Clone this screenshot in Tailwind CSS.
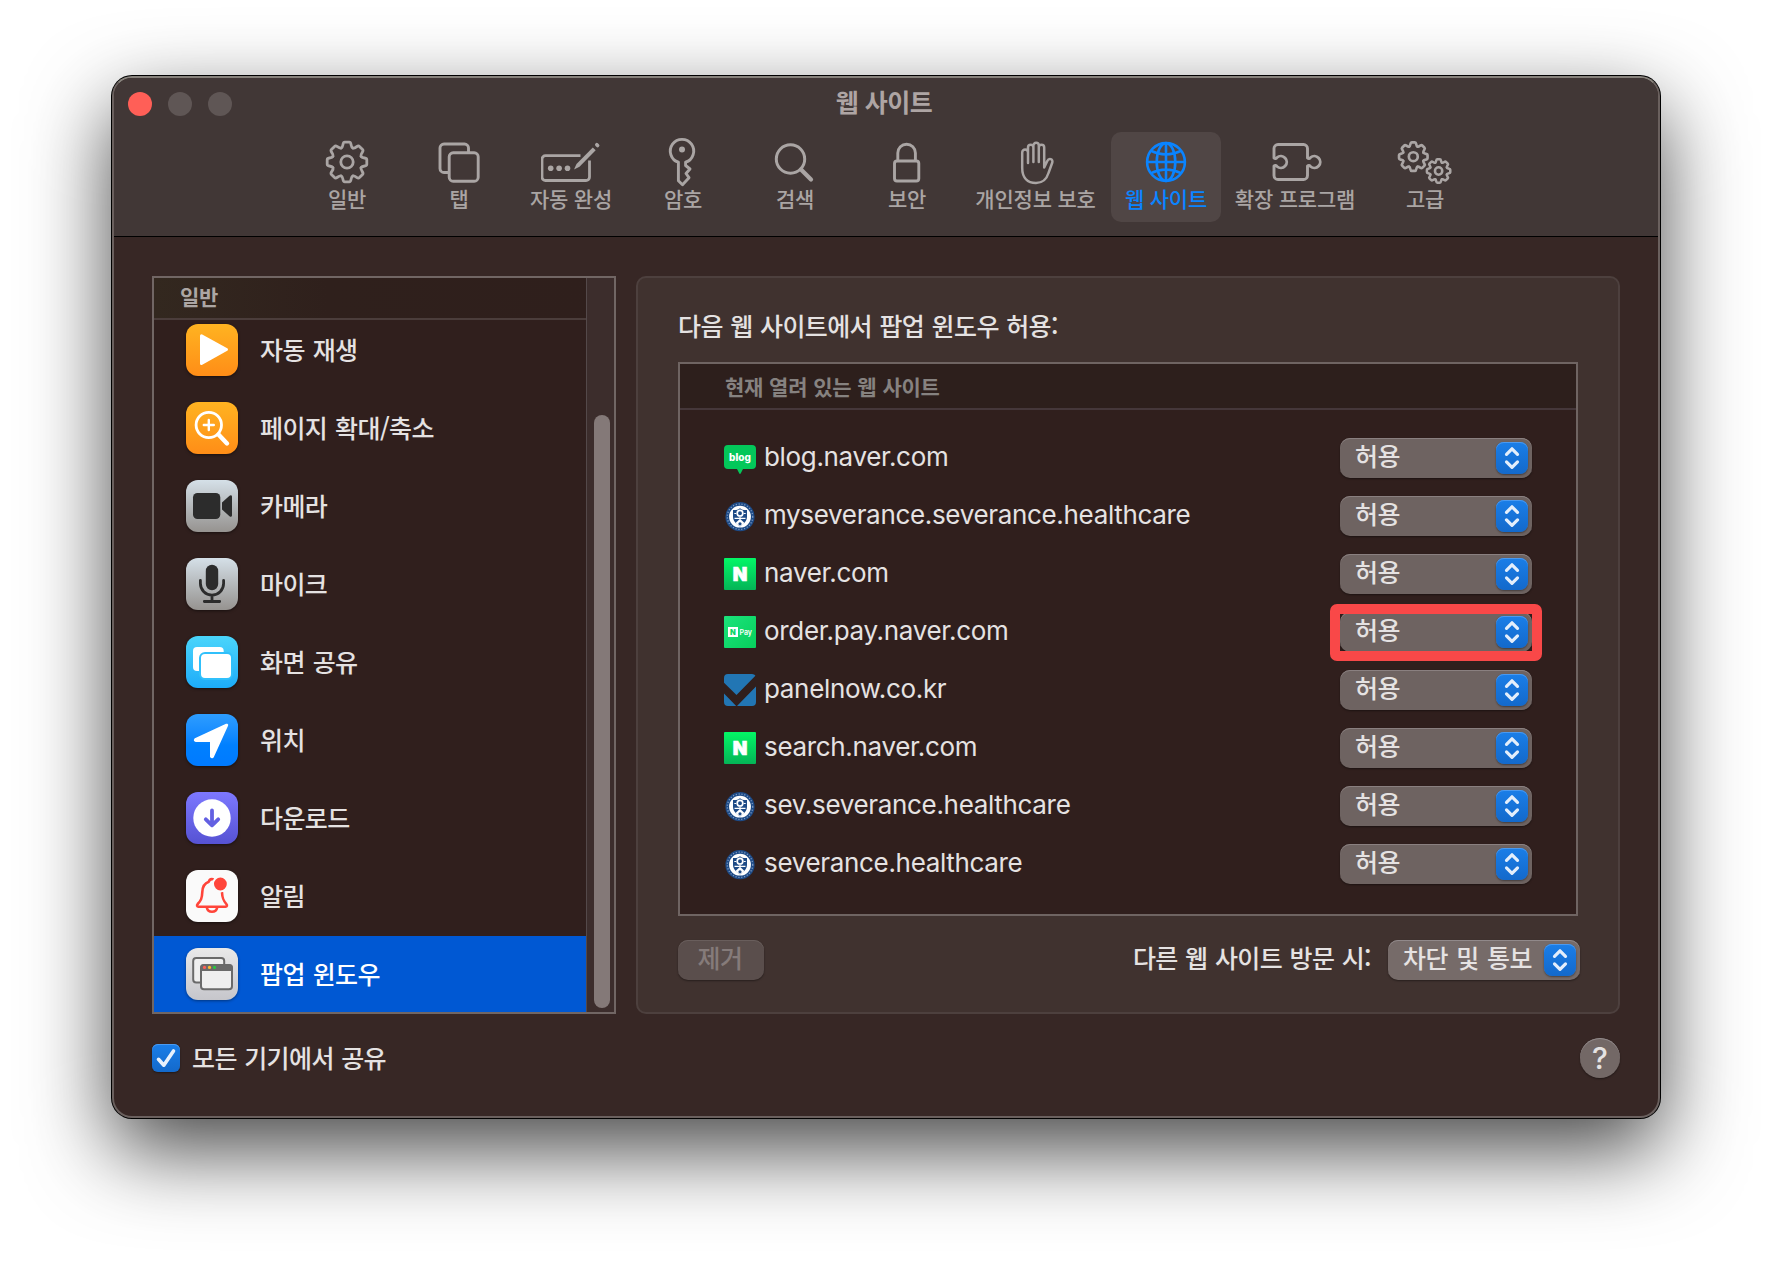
<!DOCTYPE html>
<html lang="ko">
<head>
  <meta charset="UTF-8" />
  <meta name="viewport" content="width=device-width, initial-scale=1.0" />
  <title>웹 사이트</title>
  <script src="https://cdn.jsdelivr.net/npm/@tailwindcss/browser@4"></script>
</head>
<body class="h-screen pl-[112px] pt-[76px] bg-white overflow-hidden font-['Noto_Sans_CJK_KR',sans-serif] text-[#e5e2e2]">

<!-- Shared icon shapes -->
<svg class="absolute w-0 h-0" aria-hidden="true">
  <defs>
    <path id="tooth" d="M-5.8-14C-4.8-14.4-4.3-16-4-17.6-3.7-19.4-3.2-19.8-2.2-19.8H2.2C3.2-19.8 3.7-19.4 4-17.6 4.3-16 4.8-14.4 5.8-14" />
    <g id="gear" fill="none" stroke="currentColor" stroke-linecap="round">
      <use href="#tooth" />
      <use href="#tooth" transform="rotate(45)" />
      <use href="#tooth" transform="rotate(90)" />
      <use href="#tooth" transform="rotate(135)" />
      <use href="#tooth" transform="rotate(180)" />
      <use href="#tooth" transform="rotate(225)" />
      <use href="#tooth" transform="rotate(270)" />
      <use href="#tooth" transform="rotate(315)" />
      <circle r="6.2" />
    </g>
    <linearGradient id="naverBg" x1="0" y1="0" x2="0" y2="1"><stop offset="0" stop-color="#03f766" /><stop offset="1" stop-color="#04b457" /></linearGradient>
    <linearGradient id="payBg" x1="0" y1="0" x2="1" y2="1"><stop offset="0" stop-color="#1be37c" /><stop offset="1" stop-color="#07cf5c" /></linearGradient>

    <symbol id="blog" viewBox="0 0 32 32">
      <path fill="#03c75a" d="M4 3h24a4 4 0 0 1 4 4v16a4 4 0 0 1-4 4h-9l-2.300 4.500a.8.8 0 0 1-1.400 0L13 27H4a4 4 0 0 1-4-4V7a4 4 0 0 1 4-4z" />
      <text x="16" y="18.500" text-anchor="middle" font-family="Inter" font-weight="800" font-size="10" textLength="22" fill="#fff">blog</text>
    </symbol>
    <symbol id="naver" viewBox="0 0 32 32">
      <rect width="32" height="32" rx="1" fill="url(#naverBg)" />
      <text x="16" y="23" text-anchor="middle" font-family="Inter" font-weight="900" font-size="19" fill="#fff" stroke="#fff" stroke-width=".7">N</text>
    </symbol>
    <symbol id="pay" viewBox="0 0 32 32">
      <rect width="32" height="32" rx="1" fill="url(#payBg)" />
      <rect x="4" y="11" width="10" height="10" fill="#fff" />
      <text x="9" y="18.800" text-anchor="middle" font-family="Inter" font-weight="900" font-size="7.500" fill="#0bd566">N</text>
      <text x="15.500" y="18.800" font-family="Inter" font-weight="600" font-size="7.500" textLength="12.500" lengthAdjust="spacingAndGlyphs" fill="#fff">Pay</text>
    </symbol>
    <symbol id="panel" viewBox="0 0 32 32">
      <path fill="#2276b4" d="M4 0h24c1.500 0 2.700.8 3.400 1.800L12.500 21 0 8.800V4a4 4 0 0 1 4-4zM0 19.500 12.200 32H4a4 4 0 0 1-4-4zM32 12.500V28a4 4 0 0 1-4 4H13z" />
    </symbol>
    <symbol id="severance" viewBox="0 0 32 32">
      <circle cx="16" cy="16.700" r="14.600" fill="#1d4a86" />
      <circle cx="16" cy="16.700" r="12.700" fill="none" stroke="#7f9ac0" stroke-width="1.300" stroke-dasharray="1.200 1.700" />
      <circle cx="16" cy="16.700" r="10.900" fill="#fff" />
      <path fill="#1d4a86" d="M9 10c3 .4 5-.4 7-1.800 2 1.400 4 2.200 7 1.800v6.500c0 4.500-3.200 7.700-7 10-3.800-2.300-7-5.500-7-10z" />
      <circle cx="16" cy="13.200" r="2.800" fill="#1d4a86" stroke="#fff" stroke-width="1.700" />
      <path fill="none" stroke="#fff" stroke-width="1.200" d="M10.300 13.500h2M19.700 13.500h2M16 16.500v2.500M10.500 18.300h11" />
      <path fill="#fff" d="M11.500 23 16 18.800l4.500 4.200c-1.200 1.400-2.800 2.500-4.500 3.500-1.700-1-3.300-2.100-4.500-3.500z" />
      <circle cx="16" cy="23.800" r="1.600" fill="#1d4a86" />
    </symbol>
    <symbol id="updown" viewBox="0 0 32 32">
      <path fill="none" stroke="#e3eefb" stroke-width="3.200" stroke-linecap="round" stroke-linejoin="round" d="M10.500 12.300 16 6.800l5.500 5.500M10.500 19.900 16 25.400l5.500-5.500" />
    </symbol>
  </defs>
</svg>

<!-- Window -->
<div class="w-[1548px] h-[1042px] rounded-[20px] border-2 border-[#6a605e] border-t-[#87827c] bg-[#372725] overflow-hidden shadow-[0_0_0_1px_#000,0_32px_84px_rgba(0,0,0,0.73)]">

  <!-- Title bar and toolbar -->
  <header class="h-[159px] bg-[#413736] border-b border-black">
    <div class="relative flex gap-4 h-[54px] pl-[14px] pt-[14px]">
      <span class="size-6 rounded-full bg-[#ff5f57]"></span>
      <span class="size-6 rounded-full bg-[#5f5655]"></span>
      <span class="size-6 rounded-full bg-[#5f5655]"></span>
      <h1 class="absolute left-0 right-1 top-[9px] text-center text-[25px] leading-[28px] tracking-[-0.5px] font-bold text-[#aea5a4]">웹 사이트</h1>
    </div>

    <nav class="flex justify-center gap-0.5 h-[90px] text-[21px] leading-5 tracking-[-0.2px] font-medium text-[#aaa5a4] whitespace-nowrap">
      <div class="w-[110px] flex flex-col items-center pt-0.5">
        <svg class="w-[60px] h-14" viewBox="-30 -28 60 56"><use href="#gear" stroke-width="2.800" /></svg>
        <span class="-mt-0.5">일반</span>
      </div>
      <div class="w-[110px] flex flex-col items-center pt-0.5">
        <svg class="w-[60px] h-14" viewBox="-30 -28 60 56" fill="none" stroke="currentColor" stroke-width="2.900">
          <path d="M-11 10.500H-15a4 4 0 0 1-4-4V-14a4 4 0 0 1 4-4H5.500a4 4 0 0 1 4 4v5" />
          <rect x="-9.800" y="-9.200" width="29" height="28.400" rx="4" />
        </svg>
        <span class="-mt-0.5">탭</span>
      </div>
      <div class="w-[110px] flex flex-col items-center pt-0.5">
        <svg class="w-[60px] h-14" viewBox="-29.500 -28 60 56" fill="none" stroke="currentColor" stroke-width="2.800">
          <path d="M10-6.300H-25a3.500 3.500 0 0 0-3.500 3.500V15a3.500 3.500 0 0 0 3.500 3.500H15.500a3.500 3.500 0 0 0 3.500-3.500V-1.500" />
          <path d="M3.500 7.500 6 2 22.300-14.600l2.900 2.900L9 4.800z" fill="currentColor" stroke="none" />
          <path d="m26.300-17.300.8.8" stroke-width="3.600" stroke-linecap="round" />
          <g fill="currentColor" stroke="none"><circle cx="-19.800" cy="6.300" r="2.800" /><circle cx="-11.400" cy="6.300" r="2.800" /><circle cx="-3" cy="6.300" r="2.800" /></g>
        </svg>
        <span class="-mt-0.5">자동 완성</span>
      </div>
      <div class="w-[110px] flex flex-col items-center pt-0.5">
        <svg class="w-[60px] h-14" viewBox="-30 -28 60 56" fill="none" stroke="currentColor" stroke-width="2.900" stroke-linejoin="round">
          <path d="M-4.600.2A11.700 11.700 0 1 1 2.600.2V3.500L7 7 3 11.500l3 4.200-6.500 7-4.100-4z" />
          <circle cx="-1" cy="-12.500" r="3" fill="currentColor" stroke="none" />
        </svg>
        <span class="-mt-0.5">암호</span>
      </div>
      <div class="w-[110px] flex flex-col items-center pt-0.5">
        <svg class="w-[60px] h-14" viewBox="-30 -28 60 56" fill="none" stroke="currentColor" stroke-width="3">
          <circle cx="-4.500" cy="-3" r="14.200" />
          <path d="M6 7.500 16 17.500" stroke-width="4.200" stroke-linecap="round" />
        </svg>
        <span class="-mt-0.5">검색</span>
      </div>
      <div class="w-[110px] flex flex-col items-center pt-0.5">
        <svg class="w-[60px] h-14" viewBox="-30 -28 60 56" fill="none" stroke="currentColor" stroke-width="2.900">
          <rect x="-12.500" y="-1" width="24.300" height="20" rx="2.500" />
          <path d="M-9.200-1V-9a8.800 8.800 0 0 1 17.600 0V-1" />
        </svg>
        <span class="-mt-0.5">보안</span>
      </div>
      <div class="w-[145px] flex flex-col items-center pt-0.5">
        <svg class="w-[60px] h-14" viewBox="-29 -28 60 56" fill="none" stroke="currentColor" stroke-width="2.500" stroke-linecap="round" stroke-linejoin="round">
          <path d="M-13.800 6V-9.500a2.900 2.900 0 0 1 5.800 0V1M-8-9.500V-14.500a2.700 2.700 0 0 1 5.400 0V0M-2.600-14.500v-2a2.700 2.700 0 0 1 5.400 0V0M2.800-14.500a2.700 2.700 0 0 1 5.400 0V5.500L11.300-1c1.500-3.200 6-2.200 5 1.500L12.500 11C10.500 17.500 6 21 0 21-8.500 21-13.800 15.500-13.800 6" />
        </svg>
        <span class="-mt-0.5 -ml-0.5">개인정보 보호</span>
      </div>
      <div class="w-[110px] flex flex-col items-center pt-0.5 rounded-[10px] bg-[#504645] text-[#0a84ff]">
        <svg class="w-[60px] h-14" viewBox="-30 -28 60 56" fill="none" stroke="currentColor" stroke-width="2.600">
          <circle r="18.900" />
          <ellipse rx="9.300" ry="18.900" />
          <path d="M0-19V19M-19 0H19M-15.500-11.300Q0-3.800 15.500-11.300M-15.500 11.300Q0 3.800 15.500 11.300" />
        </svg>
        <span class="-mt-0.5">웹 사이트</span>
      </div>
      <div class="w-[145px] flex flex-col items-center pt-0.5">
        <svg class="w-[60px] h-14" viewBox="-29.500 -28 60 56" fill="none" stroke="currentColor" stroke-width="2.900" stroke-linejoin="round">
          <path d="M-21.500-4V-13.500a4 4 0 0 1 4-4H8a4 4 0 0 1 4 4V-4c1 1 2.200.8 3-.5a5.900 5.900 0 1 1 0 9C14.200 3.200 13 3 12 4V13.500a4 4 0 0 1-4 4H-17.500a4 4 0 0 1-4-4V4c1-1 2.200-.8 3 .5a5.900 5.900 0 1 0 0-9C-19.300-3.200-20.500-3-21.500-4z" />
        </svg>
        <span class="-mt-0.5 -ml-px">확장 프로그램</span>
      </div>
      <div class="w-[110px] flex flex-col items-center pt-0.5">
        <svg class="w-[60px] h-14" viewBox="-30 -28 60 56">
          <use href="#gear" transform="translate(-11.700 -5.300) scale(.72)" stroke-width="3.700" />
          <use href="#gear" transform="translate(13.600 9) scale(.59)" stroke-width="4.300" />
        </svg>
        <span class="-mt-0.5">고급</span>
      </div>
    </nav>
  </header>

  <main class="px-[38px] pt-[39px]">
    <div class="flex gap-5 h-[738px]">

      <!-- Category list -->
      <aside class="w-[464px] flex border-2 border-[#716664] bg-[#301f1d] overflow-hidden">
        <div class="w-[432px]">
          <div class="relative h-[42px] border-b-2 border-[#4b3d3b] bg-linear-to-r from-[#33281f] via-[#2f201c] via-40% to-[#2f1f1c] pl-[26px] text-[21px] leading-[36px] tracking-[-0.3px] font-bold text-[#aca6a4]">일반</div>
          <ul class="-mt-2 text-[25px] leading-[74px] tracking-[-0.6px] [word-spacing:1.5px] font-medium">
            <li class="flex h-[78px] pl-8 gap-[22px]">
              <svg class="mt-3 size-[52px] rounded-xl bg-linear-to-b from-[#ffb321] to-[#ff8d17] shadow-[0_1px_3px_rgba(0,0,0,0.5)]" viewBox="0 0 52 52"><path fill="#fff" stroke="#fff" stroke-width="3" stroke-linejoin="round" d="M15.500 11.800 40.500 25.500 15.500 39.500z" /></svg>
              자동 재생
            </li>
            <li class="flex h-[78px] pl-8 gap-[22px]">
              <svg class="mt-3 size-[52px] rounded-xl bg-linear-to-b from-[#ffb321] to-[#ff8d17] shadow-[0_1px_3px_rgba(0,0,0,0.5)]" viewBox="0 0 52 52" fill="none" stroke="#fff" stroke-linecap="round"><circle cx="22.800" cy="23" r="12.700" stroke-width="2.800" /><path stroke-width="2.400" d="M17.800 23h10M22.800 18v10" /><path stroke-width="4.400" d="M32.500 32.500 41 41.500" /></svg>
              페이지 확대/축소
            </li>
            <li class="flex h-[78px] pl-8 gap-[22px]">
              <svg class="mt-3 size-[52px] rounded-xl bg-linear-to-b from-[#d5e0e8] to-[#969390] shadow-[0_1px_3px_rgba(0,0,0,0.5)]" viewBox="0 0 52 52" fill="#2c2c2c"><rect x="7" y="13" width="27.300" height="26" rx="4.500" /><path d="M36 22.500 43.500 15.800c1.200-1 2.500-.5 2.500 1v18.400c0 1.500-1.300 2-2.500 1L36 29.500z" /></svg>
              카메라
            </li>
            <li class="flex h-[78px] pl-8 gap-[22px]">
              <svg class="mt-3 size-[52px] rounded-xl bg-linear-to-b from-[#d5e0e8] to-[#969390] shadow-[0_1px_3px_rgba(0,0,0,0.5)]" viewBox="0 0 52 52" fill="none" stroke="#2c2c2c" stroke-width="2.800" stroke-linecap="round"><rect x="19.800" y="6.800" width="12.400" height="25.400" rx="6.200" fill="#2c2c2c" stroke="none" /><path d="M14.400 22.500V25.500a11.600 11.600 0 0 0 23.200 0V22.500M26 37.500V43.500M18.300 43.500H33.700" /></svg>
              마이크
            </li>
            <li class="flex h-[78px] pl-8 gap-[22px]">
              <svg class="mt-3 size-[52px] rounded-xl bg-linear-to-b from-[#4ad5fb] to-[#1cacf9] shadow-[0_1px_3px_rgba(0,0,0,0.5)]" viewBox="0 0 52 52" fill="#fff"><rect x="7" y="11" width="30.700" height="24" rx="4" /><rect x="14" y="17" width="32" height="26" rx="5" stroke="#30c0fb" stroke-width="2" /></svg>
              화면 공유
            </li>
            <li class="flex h-[78px] pl-8 gap-[22px]">
              <svg class="mt-3 size-[52px] rounded-xl bg-linear-to-b from-[#2d9dff] via-[#0080ff] via-60% to-[#007aff] shadow-[0_1px_3px_rgba(0,0,0,0.5)]" viewBox="0 0 52 52"><path fill="#fff" stroke="#fff" stroke-width="3" stroke-linejoin="round" d="M40.700 11.200 9.500 25.700Q9 26.300 10 26.500H25.500V42.500Q26 43 26.500 42.300z" /></svg>
              위치
            </li>
            <li class="flex h-[78px] pl-8 gap-[22px]">
              <svg class="mt-3 size-[52px] rounded-xl bg-linear-to-b from-[#7d78ff] to-[#5652d3] shadow-[0_1px_3px_rgba(0,0,0,0.5)]" viewBox="0 0 52 52"><circle cx="26" cy="26" r="18.700" fill="#fff" /><path fill="none" stroke="#6360e2" stroke-width="3.800" stroke-linecap="round" stroke-linejoin="round" d="M26 18.500V33M19.800 27.300 26 33.300 32.200 27.300" /></svg>
              다운로드
            </li>
            <li class="flex h-[78px] pl-8 gap-[22px]">
              <svg class="mt-3 size-[52px] rounded-xl bg-[#fafafa] shadow-[0_1px_3px_rgba(0,0,0,0.5)]" viewBox="0 0 52 52" fill="none" stroke="#ff453a" stroke-width="2.600" stroke-linecap="round" stroke-linejoin="round"><path d="M27 9.200C25 8.800 23.200 9.800 22.800 11.800 18 13.500 16.500 17 16.300 22 16 28.500 15 30.500 11.700 34 10.500 35.500 11 36.800 12.500 36.800H39.500C41 36.800 41.500 35.500 40.300 34 37.300 30.500 36.300 28.500 36 22.500M20.800 37.500a5.300 5.300 0 0 0 10.400 0" /><circle cx="34.400" cy="14" r="7.400" fill="#ff453a" stroke="#fafafa" stroke-width="2" /></svg>
              알림
            </li>
            <li class="flex h-[78px] pl-8 gap-[22px] bg-[#0058d3] text-white">
              <svg class="mt-3 size-[52px] rounded-xl bg-linear-to-b from-[#e9e9e9] to-[#c6c6cb] shadow-[0_1px_3px_rgba(0,0,0,0.4)]" viewBox="0 0 52 52" fill="#efefef" stroke="#6a6a6a" stroke-width="2"><rect x="7.200" y="10" width="31" height="24.500" rx="3" /><rect x="15" y="17" width="31" height="24.200" rx="3" /><path d="M15 22.300V19.500a2.500 2.500 0 0 1 2.500-2.500h26a2.500 2.500 0 0 1 2.500 2.500v2.800z" fill="#6a6a6a" stroke-width="1.500" /><g stroke="none"><circle cx="18.500" cy="19.400" r="1.600" fill="#ff5f57" /><circle cx="23.500" cy="19.400" r="1.600" fill="#febc2e" /><circle cx="28.500" cy="19.400" r="1.600" fill="#28c840" /></g></svg>
              팝업 윈도우
            </li>
          </ul>
        </div>
        <!-- Scroller -->
        <div class="w-7 border-l border-[#54494a] bg-[#3c2d2c] pl-[7px] pt-[137px]">
          <div class="w-4 h-[593px] rounded-full bg-[#847978]"></div>
        </div>
      </aside>

      <!-- Site permissions -->
      <section class="flex-1 rounded-[10px] border-2 border-[#4d403e] bg-[#40322f] px-10">
        <h2 class="h-[84px] pt-[31px] text-[25px] leading-[32px] tracking-[-0.6px] [word-spacing:1px] font-medium">다음 웹 사이트에서 팝업 윈도우 허용:</h2>
        <div class="h-[554px] border-2 border-[#6f6462] bg-[#301f1d]">
          <div class="h-[46px] border-b-2 border-[#45373a] bg-[#2d1f1c] pl-[45px] text-[21px] leading-[44px] tracking-[-0.3px] [word-spacing:0.5px] font-bold text-[#868280]">현재 열려 있는 웹 사이트</div>
          <ul id="sites" class="pt-[19px]"></ul>
        </div>
        <div class="mt-6 -mr-0.5 flex items-center h-10 text-[25px] tracking-[-0.6px] [word-spacing:1px] font-medium">
          <button class="w-[86px] h-10 pb-1.5 pr-0.5 rounded-[10px] bg-[#5a4e4c] text-[#857b7a] leading-[34px] shadow-[inset_0_1px_0_#695e5c,0_1px_2px_rgba(0,0,0,0.4)]">제거</button>
          <span class="ml-auto pb-1.5 leading-[36px]">다른 웹 사이트 방문 시:</span>
          <button class="ml-[17px] flex w-48 h-10 rounded-[10px] bg-[#766b69] pl-[15px] pt-1 pr-1 shadow-[inset_0_1px_0_#91898a,0_1px_2px_rgba(0,0,0,0.4)]">
            <span class="-mt-1 leading-[34px] [word-spacing:2px]">차단 및 통보</span>
            <svg class="ml-auto size-8 rounded-lg bg-linear-to-b from-[#1a7ee8] to-[#1369cb] shadow-[inset_0_1px_0_#4b9af0,0_1px_2px_rgba(0,0,0,0.4)]"><use href="#updown" /></svg>
          </button>
        </div>
      </section>
    </div>

    <footer class="mt-6 flex items-center justify-between h-10">
      <label class="flex items-center gap-3 text-[25px] leading-[36px] tracking-[-0.6px] [word-spacing:1px] font-medium">
        <svg class="size-7 rounded-md bg-linear-to-b from-[#1a7ee8] to-[#1369cb] shadow-[inset_0_1px_0_#4b9af0,0_1px_2px_rgba(0,0,0,0.4)]" viewBox="0 0 28 28"><path fill="none" stroke="#e8f1fc" stroke-width="3.600" stroke-linecap="round" stroke-linejoin="round" d="M6.500 15.300 11.800 21.200 21.500 7" /></svg>
        <span class="pb-0.5">모든 기기에서 공유</span>
      </label>
      <button class="size-10 rounded-full bg-[#736866] text-[30px] leading-10 font-medium font-['Inter',sans-serif] shadow-[inset_0_1px_0_#91898a,0_1px_2px_rgba(0,0,0,0.4)]">?</button>
    </footer>
  </main>
</div>

<script>
const sites = [
  { icon: 'blog', host: 'blog.naver.com' },
  { icon: 'severance', host: 'myseverance.severance.healthcare' },
  { icon: 'naver', host: 'naver.com' },
  { icon: 'pay', host: 'order.pay.naver.com', marked: true },
  { icon: 'panel', host: 'panelnow.co.kr' },
  { icon: 'naver', host: 'search.naver.com' },
  { icon: 'severance', host: 'sev.severance.healthcare' },
  { icon: 'severance', host: 'severance.healthcare' },
];

// Red frame around the popup button that has to be changed
const frame = '<span class="absolute -left-[10px] -top-[8px] w-[212px] h-[57px] border-[10px] border-[#f94848] rounded-[7px]"></span>';

document.getElementById('sites').innerHTML = sites.map(site => `
  <li class="flex items-center h-[58px] px-11">
    <svg class="size-8"><use href="#${site.icon}" /></svg>
    <span class="ml-2 pb-0.5 font-['Inter',sans-serif] text-[26px] leading-8 tracking-[-0.33px]">${site.host}</span>
    <button class="relative ml-auto flex w-48 h-10 rounded-[10px] bg-[#6e6361] pl-[15px] pt-1 pr-1 text-[25px] tracking-[-0.6px] font-medium shadow-[inset_0_1px_0_#8a8080,0_1px_2px_rgba(0,0,0,0.4)]">
      <span class="-mt-1 leading-[34px]">허용</span>
      <svg class="ml-auto size-8 rounded-lg bg-linear-to-b from-[#1a7ee8] to-[#1369cb] shadow-[inset_0_1px_0_#4b9af0,0_1px_2px_rgba(0,0,0,0.4)]"><use href="#updown" /></svg>
      ${site.marked ? frame : ''}
    </button>
  </li>`).join('');
</script>
</body>
</html>
